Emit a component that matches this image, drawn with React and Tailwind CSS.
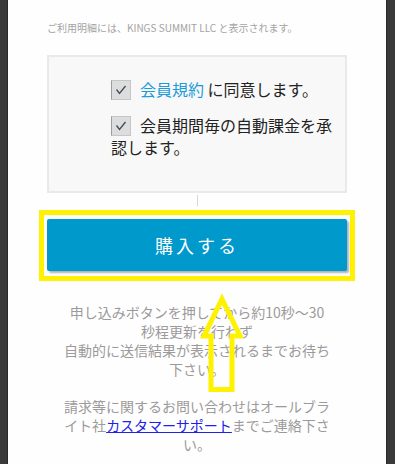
import React from "react";

function CheckBox() {
	return (
		<span className="inline-block w-5 h-5 mr-[9px] align-[-4px] bg-[#dddddd] border border-[#c6c6c6] border-l-[#9d9d9d]">
			<svg width="18" height="18" viewBox="0 0 18 18" className="block">
				<path d="M4.5 8.5 L7.5 12.5 L13.5 5" fill="none" stroke="#3f4c5c" strokeWidth="1.3" />
			</svg>
		</span>
	);
}

function App() {
	return (
		<div
			className="relative flex h-[464px] w-full overflow-hidden bg-[#3a3a3a]"
			style={{ fontFamily: '"Noto Sans CJK JP", "Noto Sans", sans-serif' }}
		>
			<div className="ml-[7px] w-[380px] border-x border-[#2a2a2a] bg-[#fefefe]">
				<div className="mx-auto w-[300px]">
					{/* 利用明細 */}
					<p className="pt-[21px] text-[10px] leading-[14px] text-[#a3a3a3] whitespace-nowrap">
						ご利用明細には、KINGS SUMMIT LLC と表示されます。
					</p>

					{/* 同意チェック */}
					<div className="mt-[20px] h-[138px] border-2 border-[#e9e9e9] bg-[#f8f8f8] pl-[62px] pr-[6px] pt-[21px] text-[16px] leading-[22px] text-[#222]">
						<div>
							<CheckBox />
							<a className="text-[#1b9bd8]">会員規約</a> に同意します。
						</div>
						<div className="mt-[14px]">
							<CheckBox />
							会員期間毎の自動課金を承認します。
						</div>
					</div>

					<div className="mx-auto mt-[2px] h-[11px] w-px bg-[#d8d8d8]" />

					{/* 購入ボタン */}
					<div className="mx-[-8px] mt-[4px] border-[5px] border-[#fff200] pl-[3px] pr-[3px] pt-[4px] pb-[5px]">
						<button className="flex h-[52px] w-[300px] items-center justify-center rounded-[2px] bg-[#0099cc] text-[18px] tracking-[3px] text-white shadow-[2px_2px_2px_rgba(0,0,0,0.3)]">
							購入する
						</button>
					</div>

					{/* 注意書き */}
					<div className="mt-[22px] text-center text-[14px] leading-[19px] text-[#9c9a9a] whitespace-nowrap">
						<p>
							申し込みボタンを押してから約10秒～30
							<br />
							秒程更新を行わず
							<br />
							自動的に送信結果が表示されるまでお待ち
							<br />
							下さい。
						</p>
						<p className="mt-[18px]">
							請求等に関するお問い合わせはオールブラ
							<br />
							イト社<a className="text-[#2020e8] underline">カスタマーサポート</a>までご連絡下さ
							<br />
							い。
						</p>
					</div>
				</div>
			</div>

			{/* 矢印 */}
			<svg className="pointer-events-none absolute left-0 top-0" width="395" height="464" viewBox="0 0 395 464">
				<path
					d="M222 299 L240 336 L232 336 L232 389.5 L211 389.5 L211 336 L204 336 Z"
					fill="none"
					stroke="#fff200"
					strokeWidth="5"
					strokeLinejoin="miter"
				/>
			</svg>
		</div>
	);
}

export default App;
